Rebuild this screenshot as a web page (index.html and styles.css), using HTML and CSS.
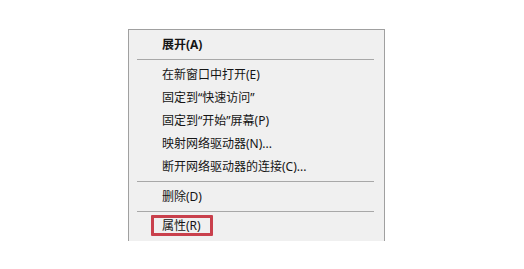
FILE: index.html
```html
<!DOCTYPE html>
<html lang="zh-CN">
<head>
<meta charset="utf-8">
<link rel="stylesheet" href="styles.css">
</head>
<body>
<div class="page">
  <div class="menu">
    <div class="item bold">展开(A)</div>
    <div class="sep"></div>
    <div class="item">在新窗口中打开(E)</div>
    <div class="item">固定到“快速访问”</div>
    <div class="item">固定到“开始”屏幕(P)</div>
    <div class="item">映射网络驱动器(N)...</div>
    <div class="item">断开网络驱动器的连接(C)...</div>
    <div class="sep"></div>
    <div class="item">删除(D)</div>
    <div class="sep"></div>
    <div class="item marked">属性(R)</div>
  </div>
</div>
</body>
</html>
```
FILE: styles.css
```css
html, body {
  margin: 0;
  padding: 0;
  background: #ffffff;
}
.page {
  width: 524px;
  height: 269px;
  padding: 29px 0 0 128px;
  box-sizing: border-box;
  overflow: hidden;
}
.menu {
  width: 257px;
  height: 212px;
  box-sizing: border-box;
  background: #f0f0f0;
  border: 1px solid #a0a0a0;
  border-bottom: none;
  padding-top: 3px;
  font-family: "Noto Sans", "Noto Sans CJK SC", sans-serif;
  font-size: 12px;
  color: #151515;
}
.item {
  height: 23px;
  line-height: 23px;
  padding-left: 33px;
}
.bold {
  font-weight: bold;
}
.sep {
  height: 1px;
  margin: 3px 10px 3px 8px;
  background: #a8a8a8;
}
.marked {
  position: relative;
  line-height: 21px;
}
.marked::before {
  content: "";
  position: absolute;
  left: 22px;
  top: 0;
  width: 62px;
  height: 21px;
  box-sizing: border-box;
  border: 3px solid #c9404c;
  border-radius: 1px;
}
```
